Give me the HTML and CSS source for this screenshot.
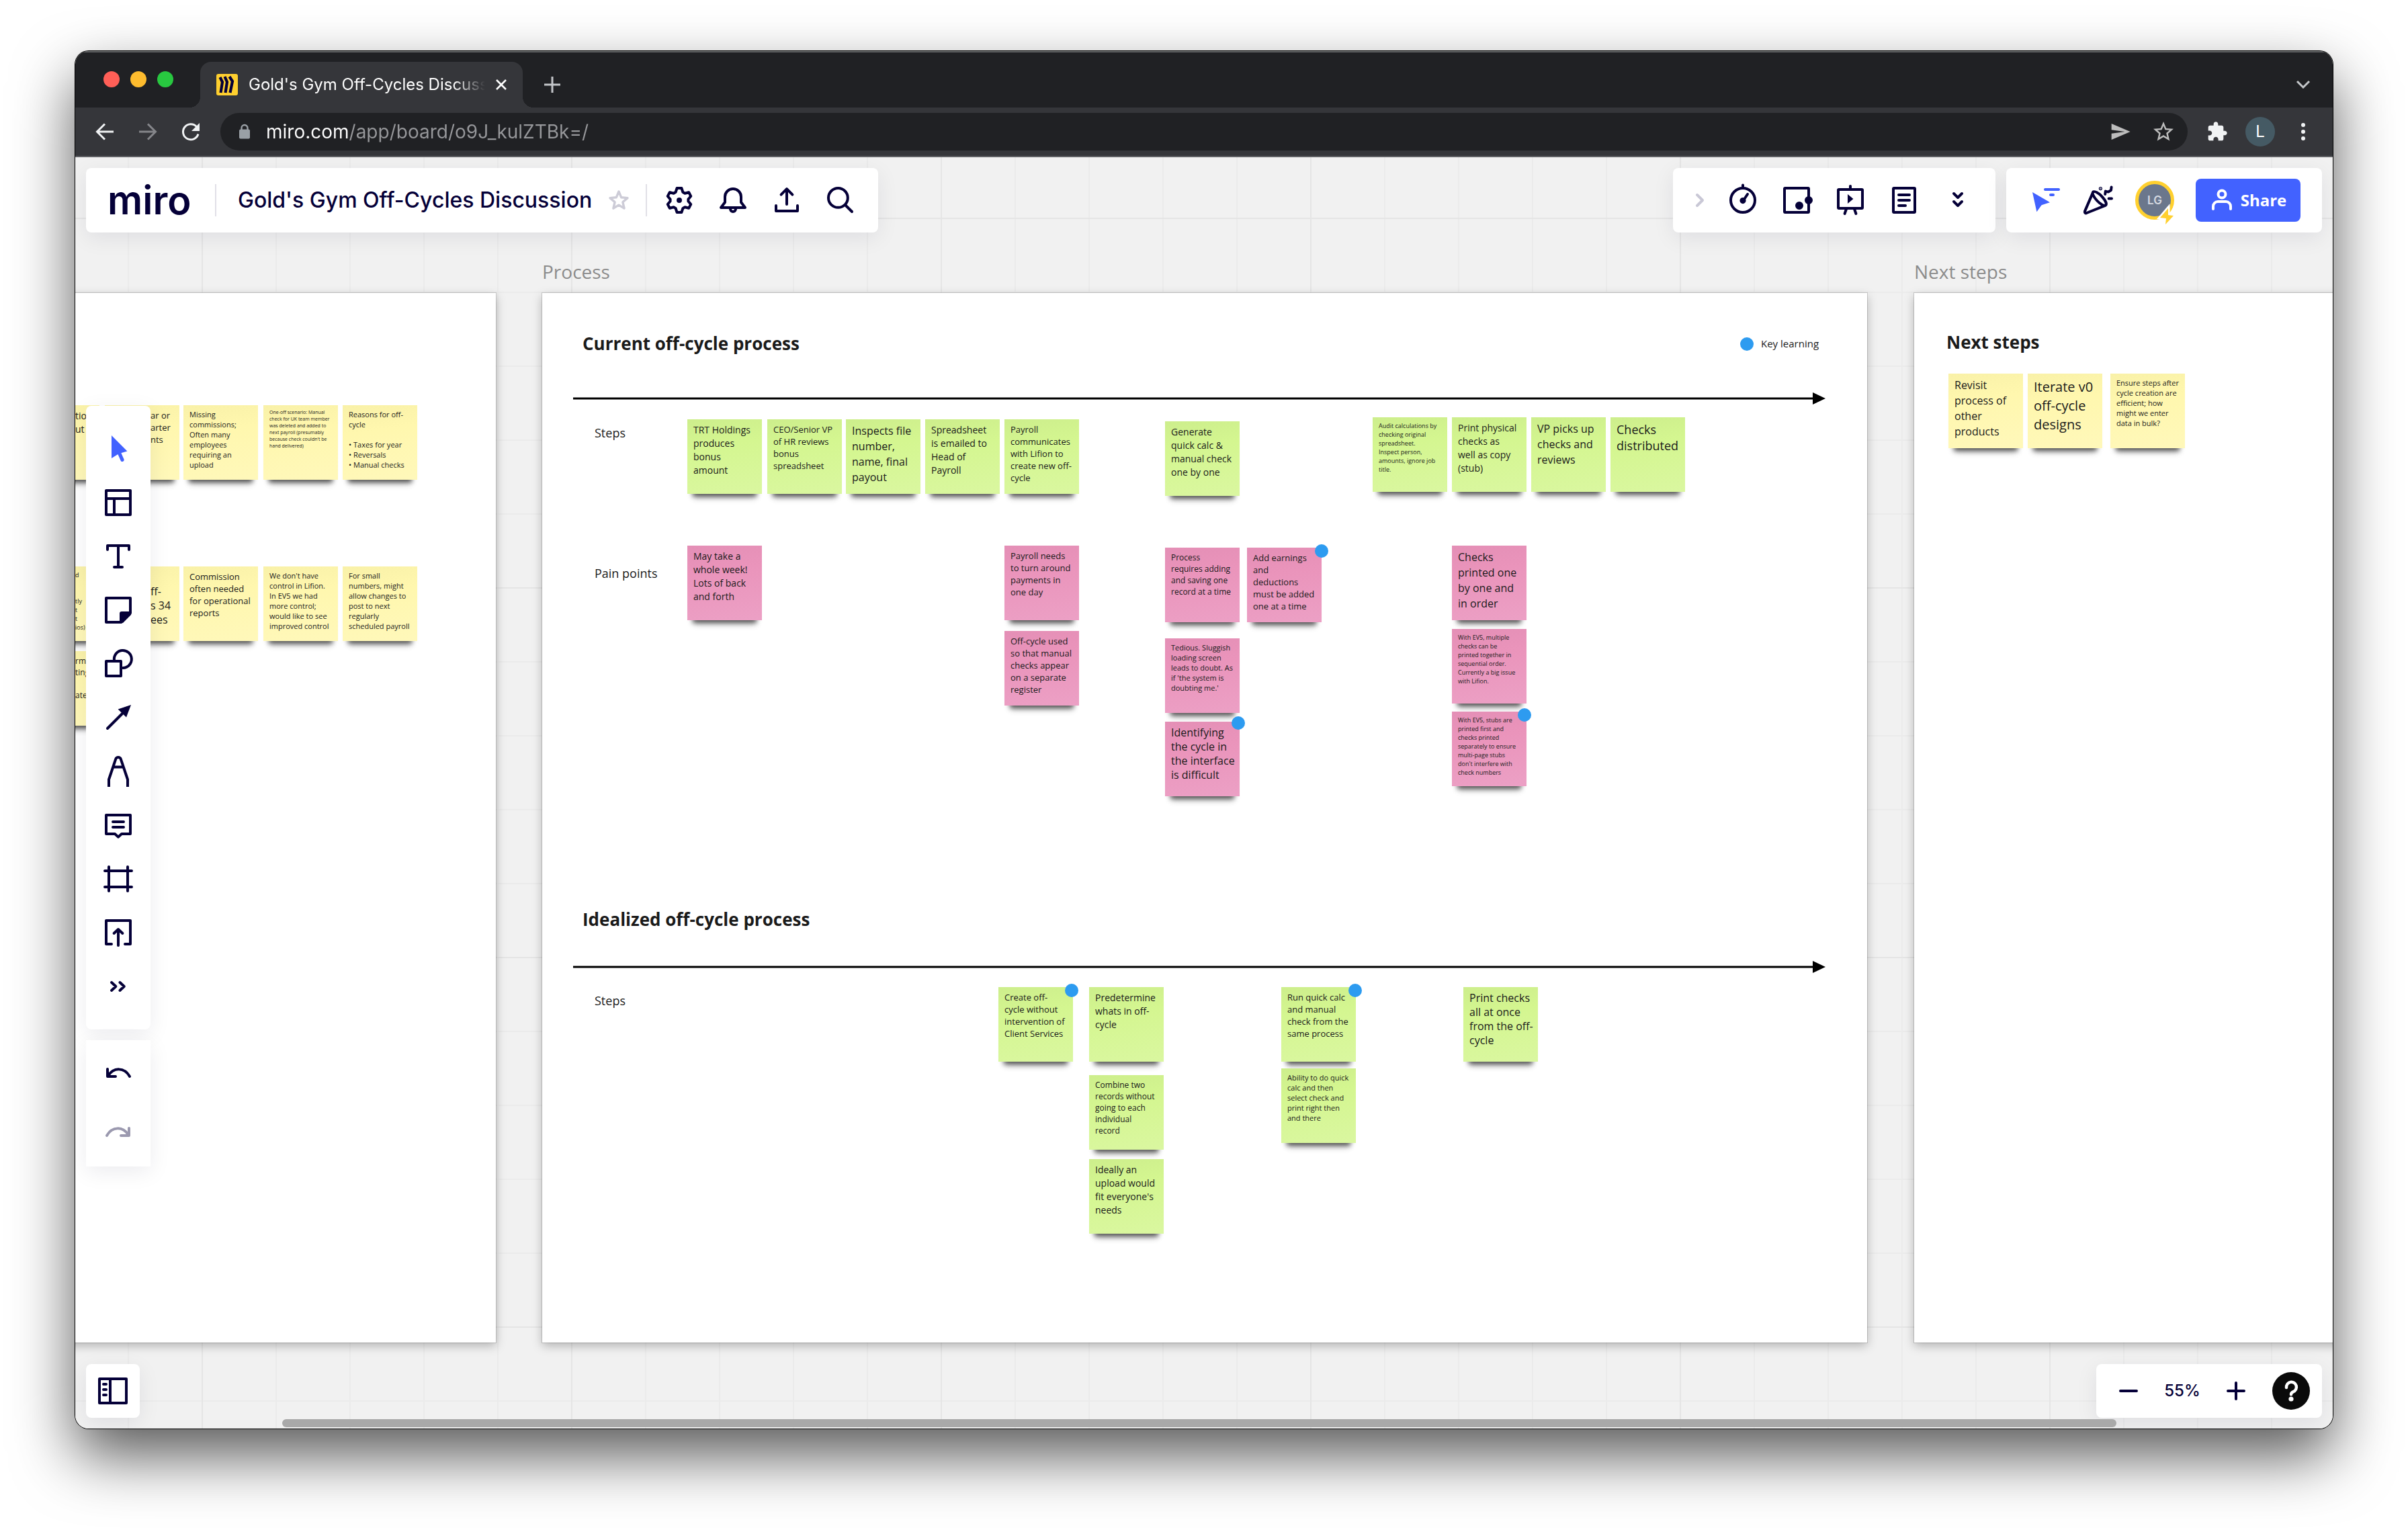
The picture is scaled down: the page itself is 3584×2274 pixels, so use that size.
FILE: index.html
```html
<!DOCTYPE html>
<html lang="en">
<head>
<meta charset="utf-8">
<title>Gold's Gym Off-Cycles Discussion</title>
<link rel="stylesheet" href="styles.css">
</head>
<body>
<div class="window">
  <header class="tabstrip">
    <div class="lights"><span class="light light-red"></span><span class="light light-amber"></span><span class="light light-green"></span></div>
    <div class="tab">
      <svg class="favicon" viewBox="0 0 32 32"><rect width="32" height="32" rx="3" fill="#ffd02f"/><path d="M5.500 5l3.500 7-2.500 16M12.500 4l3.500 8-2.500 16M19.500 4l4.500 7-3.500 17" fill="none" stroke="#050038" stroke-width="4.200"/></svg>
      <span class="tab-title">Gold's Gym Off-Cycles Discussion</span>
      <button class="tab-close" aria-label="Close tab"><svg viewBox="0 0 16 16"><path d="M1 1l14 14M15 1L1 15" fill="none" stroke="#fff" stroke-width="2.6"/></svg></button>
    </div>
    <button class="tab-new" aria-label="New tab"><svg viewBox="0 0 24 24"><path d="M12 0v24M0 12h24" fill="none" stroke="#c4c7ca" stroke-width="3"/></svg></button>
    <button class="tab-list" aria-label="Search tabs"><svg viewBox="0 0 24 24"><path d="M3 7l9 9 9-9" fill="none" stroke="#c4c7ca" stroke-width="3"/></svg></button>
  </header>
  <nav class="navbar">
    <button class="nav-btn" aria-label="Back"><svg class="s28" viewBox="0 0 28 28"><path d="M27 14H3M14 2.500L2.500 14 14 25.500" fill="none" stroke="#f1f3f4" stroke-width="3"/></svg></button>
    <button class="nav-btn" aria-label="Forward"><svg class="s28" viewBox="0 0 28 28"><path d="M1 14h24M14 2.500L25.500 14 14 25.500" fill="none" stroke="#85868a" stroke-width="3"/></svg></button>
    <button class="nav-btn" aria-label="Reload"><svg class="s28" viewBox="0 0 28 28"><path d="M25 17.500A11.500 11.500 0 1 1 22.500 6.500" fill="none" stroke="#f1f3f4" stroke-width="3"/><path d="M27 1v12H15z" fill="#f1f3f4"/></svg></button>
    <div class="omnibox">
      <svg class="lock" viewBox="0 0 16 22"><path d="M3.500 9V5.500a4.500 4.500 0 0 1 9 0V9" fill="none" stroke="#9aa0a6" stroke-width="2.400"/><rect y="7.500" width="16" height="14" rx="2" fill="#9aa0a6"/></svg>
      <input class="url" type="text" aria-label="Address" value="miro.com/app/board/o9J_kulZTBk=/">
      <button class="nav-btn" aria-label="Send"><svg class="s32" viewBox="0 0 24 24"><path d="M2 21l21-9L2 3v7l15 2-15 2z" fill="#bdbdbd"/></svg></button>
      <button class="nav-btn" aria-label="Bookmark"><svg class="s36" viewBox="0 0 24 24"><path fill="#bdbdbd" d="M22 9.240l-7.190-.62L12 2 9.190 8.630 2 9.240l5.460 4.730L5.820 21 12 17.270 18.180 21l-1.630-7.030L22 9.240zM12 15.400l-3.760 2.270 1-4.280-3.320-2.880 4.380-.38L12 6.100l1.710 4.040 4.380.38-3.320 2.880 1 4.280L12 15.400z"/></svg></button>
    </div>
    <button class="nav-btn" aria-label="Extensions"><svg class="s32" viewBox="0 0 24 24"><path fill="#f1f3f4" d="M20.500 11H19V7c0-1.100-.9-2-2-2h-4V3.500C13 2.120 11.880 1 10.500 1S8 2.120 8 3.500V5H4c-1.100 0-1.990.9-1.990 2v3.800H3.500c1.490 0 2.700 1.210 2.700 2.700s-1.210 2.700-2.700 2.700H2V20c0 1.100.9 2 2 2h3.800v-1.500c0-1.490 1.210-2.700 2.700-2.700 1.490 0 2.700 1.210 2.700 2.700V22H17c1.100 0 2-.9 2-2v-4h1.500c1.380 0 2.500-1.120 2.500-2.500S21.880 11 20.500 11z"/></svg></button>
    <button class="nav-btn" aria-label="Profile"><span class="profile">L</span></button>
    <button class="nav-btn" aria-label="Menu"><svg class="s28" viewBox="0 0 28 28"><g fill="#f1f3f4"><circle cx="14" cy="4" r="3"/><circle cx="14" cy="14" r="3"/><circle cx="14" cy="24" r="3"/></g></svg></button>
  </nav>

  <main class="board">
    <section class="frame frame-findings">
      <p class="note yellow t14 cut" style="--x:525;--y:167">tion<br>ut</p>
      <p class="note yellow t13 cut-mid" style="--x:644;--y:167">ar or<br>arter<br>nts</p>
      <p class="note yellow t11" style="--x:761;--y:167">Missing<br>commissions;<br>Often many<br>employees<br>requiring an<br>upload</p>
      <p class="note yellow t7" style="--x:880;--y:167">One-off scenario: Manual<br>check for UK team member<br>was deleted and added to<br>next payroll (presumably<br>because check couldn't be<br>hand delivered)</p>
      <p class="note yellow t11" style="--x:998;--y:167">Reasons for off-<br>cycle<br><br>• Taxes for year<br>• Reversals<br>• Manual checks</p>
      <p class="note yellow t10 cut" style="--x:525;--y:407">d<br><br><br>tly<br>t<br>t<br>ios)</p>
      <p class="note yellow t16 cut-mid" style="--x:644;--y:407"><br>ff-<br>s 34<br>ees</p>
      <p class="note yellow t13" style="--x:761;--y:407">Commission<br>often needed<br>for operational<br>reports</p>
      <p class="note yellow t11" style="--x:880;--y:407">We don't have<br>control in Lifion.<br>In EV5 we had<br>more control;<br>would like to see<br>improved control</p>
      <p class="note yellow t11" style="--x:998;--y:407">For small<br>numbers, might<br>allow changes to<br>post to next<br>regularly<br>scheduled payroll</p>
      <p class="note yellow t12 cut" style="--x:525;--y:533">rm<br>ting<br><br>ate</p>
    </section>

    <section class="frame frame-process">
      <span class="frame-label">Process</span>
      <h2 class="heading at" style="--x:60;--y:57">Current off-cycle process</h2>
      <span class="dot at" style="--x:1783;--y:66"></span>
      <span class="legend at" style="--x:1814;--y:65">Key learning</span>
      <svg class="axis at" style="--x:46;--y:147" viewBox="0 0 1864 20"><path d="M0 10h1850" stroke="#000" stroke-width="3"/><path d="M1845 1l19 9-19 9z"/></svg>
      <span class="lane at" style="--x:78;--y:196">Steps</span>
      <span class="lane at" style="--x:78;--y:405">Pain points</span>

      <p class="note green t14" style="--x:216;--y:188">TRT Holdings<br>produces<br>bonus<br>amount</p>
      <p class="note green t13" style="--x:335;--y:188">CEO/Senior VP<br>of HR reviews<br>bonus<br>spreadsheet</p>
      <p class="note green t17" style="--x:452;--y:188">Inspects file<br>number,<br>name, final<br>payout</p>
      <p class="note green t14" style="--x:570;--y:188">Spreadsheet<br>is emailed to<br>Head of<br>Payroll</p>
      <p class="note green t13" style="--x:688;--y:188">Payroll<br>communicates<br>with Lifion to<br>create new off-<br>cycle</p>
      <p class="note green t14" style="--x:927;--y:191">Generate<br>quick calc &amp;<br>manual check<br>one by one</p>
      <p class="note green t10" style="--x:1236;--y:185">Audit calculations by<br>checking original<br>spreadsheet.<br>Inspect person,<br>amounts, ignore job<br>title.</p>
      <p class="note green t14" style="--x:1354;--y:185">Print physical<br>checks as<br>well as copy<br>(stub)</p>
      <p class="note green t17" style="--x:1472;--y:185">VP picks up<br>checks and<br>reviews</p>
      <p class="note green t18" style="--x:1590;--y:185">Checks<br>distributed</p>

      <p class="note pink t14" style="--x:216;--y:376">May take a<br>whole week!<br>Lots of back<br>and forth</p>
      <p class="note pink t13" style="--x:688;--y:376">Payroll needs<br>to turn around<br>payments in<br>one day</p>
      <p class="note pink t13" style="--x:688;--y:503">Off-cycle used<br>so that manual<br>checks appear<br>on a separate<br>register</p>
      <p class="note pink t12" style="--x:927;--y:379">Process<br>requires adding<br>and saving one<br>record at a time</p>
      <p class="note pink t13" style="--x:1049;--y:379">Add earnings<br>and<br>deductions<br>must be added<br>one at a time</p>
      <p class="note pink t11" style="--x:927;--y:514">Tedious. Sluggish<br>loading screen<br>leads to doubt. As<br>if 'the system is<br>doubting me.'</p>
      <p class="note pink t16" style="--x:927;--y:638">Identifying<br>the cycle in<br>the interface<br>is difficult</p>
      <p class="note pink t17" style="--x:1354;--y:376">Checks<br>printed one<br>by one and<br>in order</p>
      <p class="note pink t10" style="--x:1354;--y:500">With EV5, multiple<br>checks can be<br>printed together in<br>sequential order.<br>Currently a big issue<br>with Lifion.</p>
      <p class="note pink t10" style="--x:1354;--y:623">With EV5, stubs are<br>printed first and<br>checks printed<br>separately to ensure<br>multi-page stubs<br>don't interfere with<br>check numbers</p>
      <span class="dot at" style="--x:1150;--y:374"></span>
      <span class="dot at" style="--x:1026;--y:630"></span>
      <span class="dot at" style="--x:1452;--y:618"></span>

      <h2 class="heading at" style="--x:60;--y:914">Idealized off-cycle process</h2>
      <svg class="axis at" style="--x:46;--y:993" viewBox="0 0 1864 20"><path d="M0 10h1850" stroke="#000" stroke-width="3"/><path d="M1845 1l19 9-19 9z"/></svg>
      <span class="lane at" style="--x:78;--y:1041">Steps</span>

      <p class="note green t13" style="--x:679;--y:1033">Create off-<br>cycle without<br>intervention of<br>Client Services</p>
      <p class="note green t14" style="--x:814;--y:1033">Predetermine<br>whats in off-<br>cycle</p>
      <p class="note green t12" style="--x:814;--y:1164">Combine two<br>records without<br>going to each<br>individual<br>record</p>
      <p class="note green t14" style="--x:814;--y:1289">Ideally an<br>upload would<br>fit everyone's<br>needs</p>
      <p class="note green t13" style="--x:1100;--y:1033">Run quick calc<br>and manual<br>check from the<br>same process</p>
      <p class="note green t11" style="--x:1100;--y:1154">Ability to do quick<br>calc and then<br>select check and<br>print right then<br>and there</p>
      <p class="note green t16" style="--x:1371;--y:1033">Print checks<br>all at once<br>from the off-<br>cycle</p>
      <span class="dot at" style="--x:778;--y:1028"></span>
      <span class="dot at" style="--x:1200;--y:1028"></span>
    </section>

    <section class="frame frame-next">
      <span class="frame-label">Next steps</span>
      <h2 class="heading at" style="--x:48;--y:55">Next steps</h2>
      <p class="note yellow t17" style="--x:51;--y:120">Revisit<br>process of<br>other<br>products</p>
      <p class="note yellow t20" style="--x:169;--y:120">Iterate v0<br>off-cycle<br>designs</p>
      <p class="note yellow t11" style="--x:292;--y:120">Ensure steps after<br>cycle creation are<br>efficient; how<br>might we enter<br>data in bulk?</p>
    </section>

    <div class="ui">
      <div class="topbar">
        <div class="panel panel-title">
          <a class="logo" href="#">miro</a>
          <span class="rule"></span>
          <h1 class="board-name">Gold's Gym Off-Cycles Discussion</h1>
          <button class="star" aria-label="Star board"><svg viewBox="0 0 32 32"><path d="M16 3l3.700 8.800 9.300.8-7.100 6.200 2.200 9.200-8.100-4.900L7.900 28l2.200-9.200L3 12.600l9.300-.8z" fill="none" stroke="#cdccd7" stroke-width="3.400" stroke-linejoin="round"/></svg></button>
          <span class="rule"></span>
          <button class="tool" aria-label="Settings"><svg class="icon" viewBox="0 0 24 24"><path d="M10.300 3h3.400L14.700 6 16.200 6.900 19.100 6.100 20.600 9 18.700 11.300v1.400L20.600 15 19.100 17.900 16.200 17.100 14.700 18 13.700 21h-3.400L9.300 18 7.800 17.100 4.900 17.900 3.400 15 5.300 12.700v-1.400L3.400 9 4.900 6.100 7.800 6.900 9.300 6z"/><circle class="solid" cx="12" cy="12" r="1"/></svg></button>
          <button class="tool" aria-label="Notifications"><svg class="icon" viewBox="0 0 24 24"><path d="M3 17.500h18L18 13.500V9.500a6 6 0 0 0-12 0v4zM10 18.500a2 2 0 0 0 4 0"/></svg></button>
          <button class="tool" aria-label="Export"><svg class="icon" viewBox="0 0 24 24"><path d="M4 16v4h16v-4M12 15V4M7.800 7.800L12 3.600l4.200 4.200"/></svg></button>
          <button class="tool" aria-label="Search"><svg class="icon" viewBox="0 0 24 24"><circle cx="10.200" cy="10.200" r="7.200"/><path d="M15.500 15.500L20.500 20.500"/></svg></button>
        </div>
        <div class="topbar-right">
          <div class="panel panel-apps">
            <button class="tool tool-narrow" aria-label="Collapse"><svg class="icon pale" viewBox="0 0 24 24"><path d="M10 8l4 4-4 4"/></svg></button>
            <button class="tool" aria-label="Timer"><svg class="icon" viewBox="0 0 24 24"><circle cx="12" cy="12" r="9"/><path d="M12 .8v2M12.500 12L15.500 7.500"/><circle class="solid" cx="12" cy="12.300" r="1.300"/></svg></button>
            <button class="tool" aria-label="Voting"><svg class="icon" viewBox="0 0 24 24"><rect x="3" y="3" width="18" height="18" rx=".5"/><circle class="solid" cx="14" cy="16" r="2"/><circle class="solid" cx="21" cy="12" r="2"/></svg></button>
            <button class="tool" aria-label="Presentation"><svg class="icon" viewBox="0 0 24 24"><rect x="3" y="4" width="18" height="14" rx=".5"/><path d="M12 1.500V4M9 18.500L7.800 22M15 18.500L16.200 22"/><path class="fill" d="M10 7.500v7l4.200-3.500z"/></svg></button>
            <button class="tool" aria-label="Notes"><svg class="icon" viewBox="0 0 24 24"><rect x="4" y="3" width="16" height="18" rx=".5"/><path d="M8 8h8M8 12h8M8 16h5"/></svg></button>
            <button class="tool" aria-label="More apps"><svg class="icon" viewBox="0 0 24 24"><path d="M9 7l3 3 3-3M9 13l3 3 3-3"/></svg></button>
          </div>
          <div class="panel panel-share">
            <button class="tool" aria-label="Cursors"><svg class="icon blue" viewBox="0 0 24 24"><path class="fill" d="M2.500 6l13 7.600-6.200 2-3.600 5z"/><path d="M12 4h10M16 8h2"/></svg></button>
            <button class="tool" aria-label="Reactions"><svg class="icon" viewBox="0 0 24 24"><path d="M7.700 5.800L1.500 20.200c-.4 1 .4 1.800 1.300 1.300L17 15.800M7.700 5.800c1.200-.8 4.200.8 6.700 3.600s3.600 5.400 2.600 6.400c-1.200.8-4.200-1-6.700-3.800S6.700 6.600 7.700 5.800zM16.600 7.500l.3-2.200 2.100.5 2-1.300.3-2.200M19.300 10.800h2.200"/><circle class="solid" cx="13.200" cy="3.300" r=".3"/></svg></button>
            <button class="avatar" aria-label="LG">LG<svg class="bolt" viewBox="0 0 24 28"><path d="M14 2L2 16l9 1-1 9L22 13l-8-1z" fill="#ffd02f" stroke="#fff" stroke-width="5" paint-order="stroke"/></svg></button>
            <button class="share"><svg viewBox="0 0 36 36"><g fill="none" stroke="#fff" stroke-width="4" stroke-linecap="round"><circle cx="18" cy="10" r="5.500"/><path d="M5 32v-4a7 7 0 0 1 7-7h12a7 7 0 0 1 7 7v4"/></g></svg>Share</button>
          </div>
        </div>
      </div>

      <div class="rail">
        <div class="panel-rail">
          <button class="rail-btn" aria-label="Select"><svg class="icon blue" viewBox="0 0 24 24"><path class="fill" d="M7 2L18.700 13.700 14 15.100 11.200 16.400 7 19z"/><path d="M12.500 14.500L15 20.200" stroke-width="2.600"/></svg></button>
          <button class="rail-btn" aria-label="Templates"><svg class="icon" viewBox="0 0 24 24"><path d="M3 3h18v18H3zM3 9h18M9 9v12"/></svg></button>
          <button class="rail-btn" aria-label="Text"><svg class="icon" viewBox="0 0 24 24"><path d="M4 7V4h16v3M12 4v16M9 20h6"/></svg></button>
          <button class="rail-btn" aria-label="Sticky note"><svg class="icon" viewBox="0 0 24 24"><path d="M21 14V3H3v18h11z"/><path class="fill" d="M13 22v-7.500a1.500 1.500 0 0 1 1.500-1.500H22l-.5 2.500-6 6z"/></svg></button>
          <button class="rail-btn" aria-label="Shapes"><svg class="icon" viewBox="0 0 24 24"><path d="M3 10h11v11H3zM9 9.500a6.500 6.500 0 1 1 6.500 5.500"/></svg></button>
          <button class="rail-btn" aria-label="Connection line"><svg class="icon" viewBox="0 0 24 24"><path d="M4 20L16 8"/><path class="fill" d="M21.500 2.500L18 11.800 11.800 5.800z"/></svg></button>
          <button class="rail-btn" aria-label="Pen"><svg class="icon" viewBox="0 0 24 24"><path stroke-linecap="butt" d="M5 23.500V18L10.200 2.600c.6-1.500 3-1.500 3.600 0L19 18v5.500M8.500 8.700h7"/></svg></button>
          <button class="rail-btn" aria-label="Comment"><svg class="icon" viewBox="0 0 24 24"><path d="M3 4.500h18v14h-6.500L12 20.800 9.500 18.500H3zM8 9.500h8M8 13.500h8"/></svg></button>
          <button class="rail-btn" aria-label="Frame"><svg class="icon" viewBox="0 0 24 24"><path d="M5 3v18M19 3v18M2 6h20M2 18h20"/></svg></button>
          <button class="rail-btn" aria-label="Upload"><svg class="icon" viewBox="0 0 24 24"><path d="M7 20.500H3V3h18v17.500h-4M12 21.500V9.500M8.800 12.500L12 9.500l3.200 3"/></svg></button>
          <button class="rail-btn" aria-label="More tools"><svg class="icon" viewBox="0 0 24 24"><path d="M7 9l3.200 3L7 15M13.200 9l3.200 3-3.200 3"/></svg></button>
        </div>
        <div class="panel-undo">
          <button class="undo-btn" aria-label="Undo"><svg class="icon" viewBox="0 0 24 24"><path d="M4 8.500V14h6M4.500 13.500C8.500 7 16.500 7 20.500 14"/></svg></button>
          <button class="undo-btn" aria-label="Redo"><svg class="icon dim" viewBox="0 0 24 24"><path d="M20 8.500V14h-6M19.500 13.500C15.500 7 7.500 7 3.500 14"/></svg></button>
        </div>
      </div>

      <div class="bottombar">
        <button class="panel-map" aria-label="Frames list"><svg class="icon" viewBox="0 0 24 24"><path d="M2 3h20v18H2zM10 3v18M5 7h2M5 11h2M5 15h2"/></svg></button>
        <div class="panel-zoom">
          <button class="zoom-btn" aria-label="Zoom out"><svg class="icon" viewBox="0 0 24 24"><path d="M6 12h12"/></svg></button>
          <button class="zoom-btn">55%</button>
          <button class="zoom-btn" aria-label="Zoom in"><svg class="icon" viewBox="0 0 24 24"><path d="M6 12h12M12 6v12"/></svg></button>
          <button class="help" aria-label="Help"><svg viewBox="0 0 56 56"><path d="M21 23a7.500 7.500 0 1 1 10 6.300c-2 .8-3 1.700-3 4" fill="none" stroke="#fff" stroke-width="4.500" stroke-linecap="round"/><circle cx="28" cy="40" r="3.600" fill="#fff"/></svg></button>
        </div>
      </div>
    </div>
    <div class="scrollbar"></div>
  </main>
</div>
</body>
</html>
```
FILE: styles.css
```css
* { box-sizing: border-box; }

body {
  margin: 0;
  min-height: 100vh;
  padding: 76px 112px 148px;
  display: flex;
  flex-direction: column;
  overflow: hidden;
  background: #fff;
  color: #1a1a1a;
  font-family: "Open Sans", "Noto Sans", sans-serif;
}

button {
  margin: 0;
  padding: 0;
  border: 0;
  background: none;
  font: inherit;
  color: inherit;
  display: flex;
  align-items: center;
  justify-content: center;
  flex: none;
}

svg { display: block; overflow: visible; }
h1, h2, p { margin: 0; }

.window {
  flex: 1;
  display: flex;
  flex-direction: column;
  border-radius: 20px;
  overflow: hidden;
  box-shadow: 0 0 0 1px #000, 0 40px 90px rgba(0, 0, 0, .66);
}

/* browser chrome */
.tabstrip {
  display: flex;
  align-items: center;
  height: 84px;
  padding: 0 24px 0 42px;
  background: #202124;
  box-shadow: inset 0 2px 0 #66686a;
  font-family: Inter, sans-serif;
}
.lights { display: flex; gap: 16px; }
.light { width: 24px; height: 24px; border-radius: 50%; }
.light-red { background: #ff5f57; }
.light-amber { background: #febc2e; }
.light-green { background: #28c840; }

.tab {
  position: relative;
  align-self: flex-end;
  display: flex;
  align-items: center;
  width: 480px;
  height: 68px;
  margin-left: 40px;
  padding: 0 24px;
  border-radius: 16px 16px 0 0;
  background: #35363a;
}
.tab::before, .tab::after {
  content: "";
  position: absolute;
  bottom: 0;
  width: 16px;
  height: 16px;
}
.tab::before { right: 100%; background: radial-gradient(circle at 0 0, transparent 16px, #35363a 16px); }
.tab::after { left: 100%; background: radial-gradient(circle at 100% 0, transparent 16px, #35363a 16px); }
.favicon { width: 32px; height: 32px; flex: none; }
.tab-title {
  flex: 1;
  margin: 0 16px;
  overflow: hidden;
  white-space: nowrap;
  color: #fff;
  font-size: 24px;
  line-height: 32px;
  -webkit-mask-image: linear-gradient(90deg, #000 calc(100% - 48px), transparent);
  mask-image: linear-gradient(90deg, #000 calc(100% - 48px), transparent);
}
.tab-close svg { width: 16px; height: 16px; }
.tab-new, .tab-list { align-self: flex-end; height: 68px; }
.tab-new { margin-left: 32px; }
.tab-new svg, .tab-list svg { width: 24px; height: 24px; }
.tab-list { margin-left: auto; width: 40px; }

.navbar {
  display: flex;
  align-items: center;
  height: 74px;
  padding: 0 12px;
  background: #35363a;
  border-bottom: 2px solid #606165;
  font-family: Inter, sans-serif;
}
.nav-btn { width: 64px; height: 56px; }
.s28 { width: 28px; height: 28px; }
.s32 { width: 32px; height: 32px; }
.s36 { width: 36px; height: 36px; }
.omnibox {
  flex: 1;
  display: flex;
  align-items: center;
  height: 56px;
  margin: 0 12px;
  padding: 0 4px 0 28px;
  border-radius: 28px;
  background: #202124;
}
.lock { width: 16px; height: 22px; flex: none; }
.url {
  flex: 1;
  min-width: 0;
  margin-left: 24px;
  padding: 0;
  border: 0;
  outline: 0;
  font: 28px/36px Inter, sans-serif;
  background: linear-gradient(90deg, #fff 124px, #97989b 124px);
  -webkit-background-clip: text;
  background-clip: text;
  color: transparent;
}
.profile {
  width: 44px;
  border-radius: 50%;
  background: #455a64;
  color: #fff;
  font-size: 24px;
  line-height: 44px;
}

/* board surface */
.board {
  position: relative;
  flex: 1;
  overflow: hidden;
  background-color: #f1f1f1;
  background-image:
    linear-gradient(90deg, #e5e5e5 2px, transparent 2px),
    linear-gradient(#e5e5e5 2px, transparent 2px),
    linear-gradient(90deg, #ebebeb 2px, transparent 2px),
    linear-gradient(#ebebeb 2px, transparent 2px);
  background-size: 550px 550px, 550px 550px, 110px 110px, 110px 110px;
  background-position: 188px 90px;
}
.frame {
  position: absolute;
  top: 202px;
  height: 1562px;
  background: #fff;
  box-shadow: 0 0 0 1px rgba(0, 0, 0, .14), 0 5px 14px rgba(0, 0, 0, .26);
}
.frame-findings { left: -600px; width: 1226px; }
.frame-process { left: 695px; width: 1972px; }
.frame-next { left: 2737px; width: 1226px; }
.frame-label {
  position: absolute;
  bottom: 100%;
  left: 0;
  padding-bottom: 13px;
  color: #8c8c8c;
  font-size: 28px;
  line-height: 38px;
}

.at, .note {
  position: absolute;
  left: calc(var(--x) * 1px);
  top: calc(var(--y) * 1px);
}
.heading { font-size: 26px; line-height: 36px; font-weight: 700; white-space: nowrap; }
.lane { font-size: 18px; line-height: 24px; white-space: nowrap; }
.legend { font-size: 15px; line-height: 20px; white-space: nowrap; }
.dot { width: 20px; height: 20px; border-radius: 50%; background: #2d9bf0; }
.axis { width: 1864px; height: 20px; }

.note {
  width: 111px;
  height: 111px;
  padding: 6px 0 0 9px;
  white-space: nowrap;
  box-shadow: 0 12px 7px -8px rgba(0, 0, 0, .6), 0 16px 10px -10px rgba(0, 0, 0, .2);
}
.yellow { background: linear-gradient(172deg, #f9f1a8, #fff7ae 35%, #fff8ba); }
.green { background: linear-gradient(172deg, #cdee8c, #d4f690 35%, #daf7a0); }
.pink { background: linear-gradient(172deg, #e48fb6, #ea94bb 35%, #eca0c5); }
.cut { padding-left: 75px; }
.cut-mid { padding-left: 68px; }
.t7 { font-size: 7px; line-height: 10px; }
.t10 { font-size: 9px; line-height: 13px; }
.t11 { font-size: 11px; line-height: 15px; }
.t12 { font-size: 12px; line-height: 17px; }
.t13 { font-size: 13px; line-height: 18px; }
.t14 { font-size: 14px; line-height: 20px; }
.t16 { font-size: 16px; line-height: 21px; }
.t17 { font-size: 16px; line-height: 23px; }
.t18 { font-size: 18px; line-height: 24px; }
.t20 { font-size: 20px; line-height: 28px; }

/* floating controls */
.ui {
  position: absolute;
  inset: 0;
  display: flex;
  flex-direction: column;
  padding: 16px;
  color: #050038;
}
.icon {
  width: 48px;
  height: 48px;
  fill: none;
  stroke: currentColor;
  stroke-width: 2;
  stroke-linecap: round;
  stroke-linejoin: round;
}
.icon .fill { fill: currentColor; stroke: none; }
.icon .solid { fill: currentColor; }
.blue { color: #4262ff; }
.pale { color: #c9c8d6; }
.dim { color: #9b99af; }

.topbar, .bottombar { display: flex; justify-content: space-between; }
.topbar-right { display: flex; gap: 16px; }
.panel, .panel-rail, .panel-undo, .panel-map, .panel-zoom {
  background: #fff;
  border-radius: 8px;
  box-shadow: 0 8px 32px rgba(5, 0, 56, .08);
}
.panel { display: flex; align-items: center; height: 96px; }
.panel-title { padding: 0 16px 0 32px; }
.panel-apps { padding: 0 16px; }
.panel-share { padding: 0 32px 0 18px; }
.logo {
  width: 126px;
  color: #050038;
  font: 600 58px/64px Inter, sans-serif;
  text-decoration: none;
}
.rule { width: 2px; height: 48px; background: #e1e0e7; }
.logo + .rule { margin: 0 32px 0 34px; }
.board-name { font: 500 32px/40px Inter, sans-serif; white-space: nowrap; }
.star { width: 32px; height: 40px; margin: 0 24px; }
.star svg { width: 32px; height: 32px; }
.star + .rule { margin-right: 8px; }
.tool { width: 80px; height: 80px; }
.tool-narrow { width: 48px; }

.avatar {
  position: relative;
  width: 58px;
  height: 58px;
  margin-left: 14px;
  border: 5px solid #ffd02f;
  border-radius: 50%;
  background: #6b778c;
  color: #d5d9e0;
  font: 600 17px/20px Inter, sans-serif;
}
.bolt { position: absolute; right: -6px; bottom: -14px; width: 24px; height: 28px; }
.share {
  gap: 10px;
  width: 156px;
  height: 64px;
  margin-left: 32px;
  padding-bottom: 2px;
  border-radius: 8px;
  background: #4262ff;
  color: #fff;
  font-size: 24px;
  font-weight: 700;
}
.share svg { width: 36px; height: 36px; }

.rail {
  flex: 1;
  display: flex;
  flex-direction: column;
  align-items: flex-start;
  justify-content: center;
  gap: 16px;
  padding-bottom: 36px;
}
.panel-rail { padding: 24px 0; }
.panel-undo { padding: 6px 0; border-radius: 0; }
.rail-btn { width: 96px; height: 80px; }
.undo-btn { width: 96px; height: 88px; }

.panel-map { width: 80px; height: 80px; }
.panel-zoom { display: flex; align-items: center; height: 80px; padding: 0 18px 0 8px; }
.zoom-btn { width: 80px; height: 80px; font: 500 24px/32px Inter, sans-serif; }
.help { width: 56px; height: 56px; margin-left: 14px; border-radius: 50%; background: #0a0a0a; }
.help svg { width: 56px; height: 56px; }

.scrollbar {
  position: absolute;
  left: 308px;
  right: 322px;
  bottom: 2px;
  height: 12px;
  border-radius: 6px;
  background: #a9a9a9;
}
```
